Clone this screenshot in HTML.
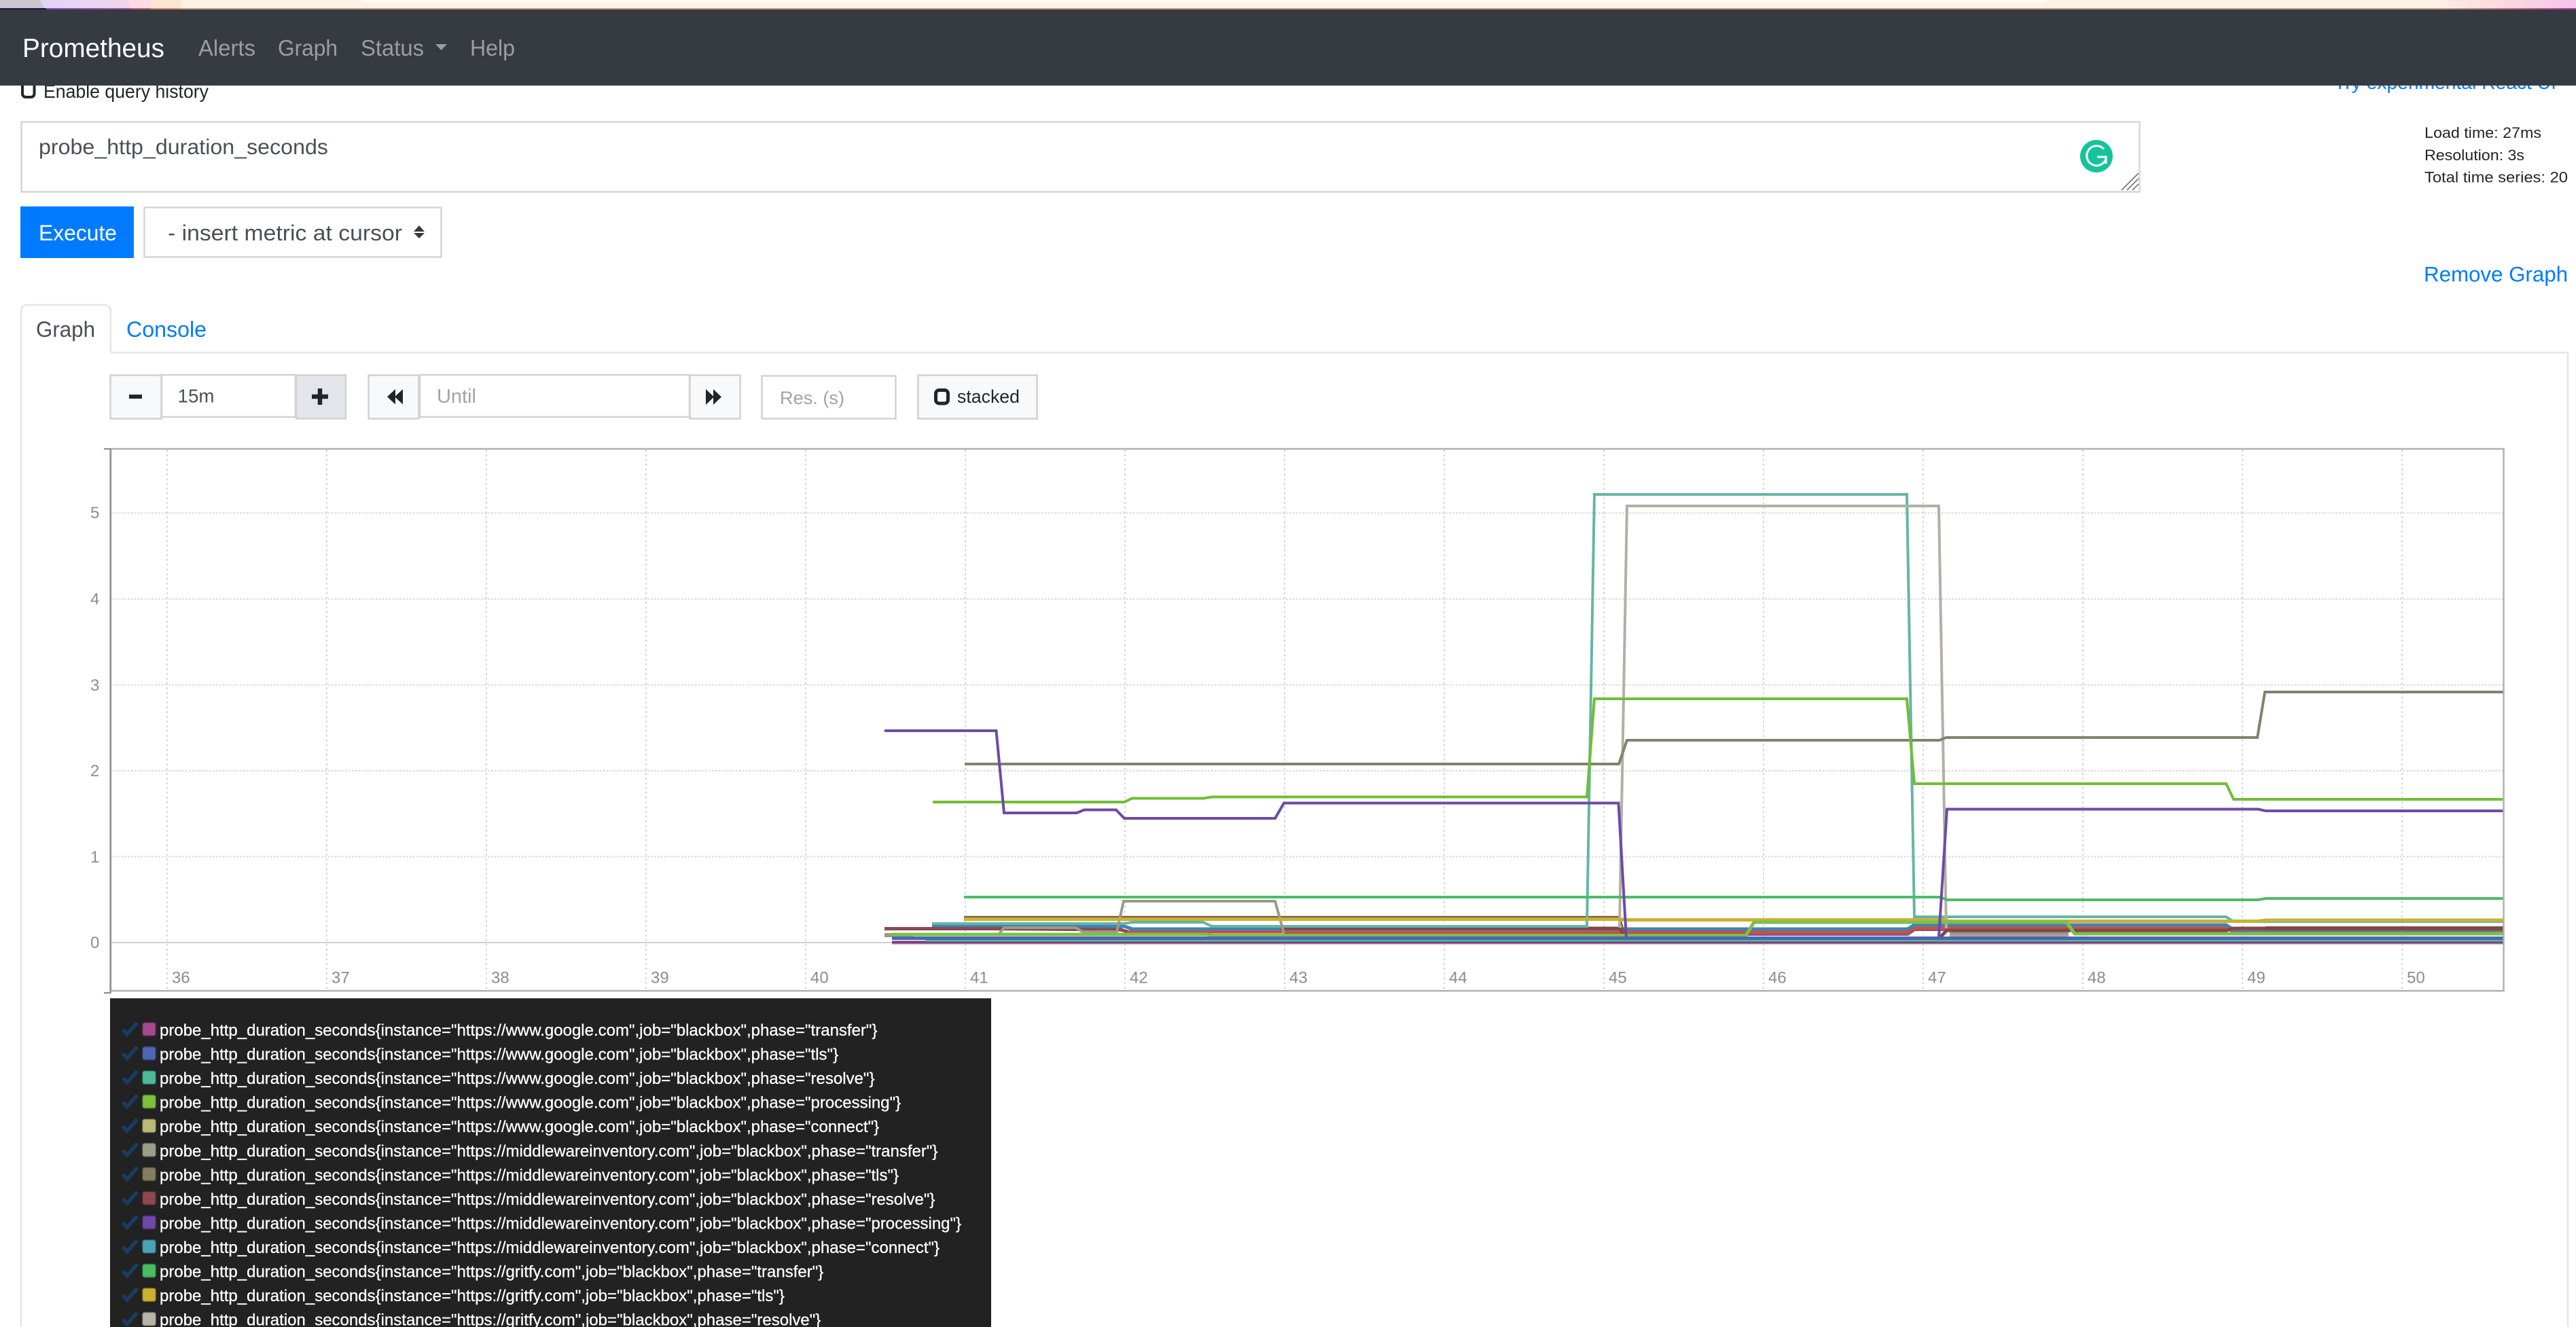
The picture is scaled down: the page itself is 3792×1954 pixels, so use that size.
<!DOCTYPE html>
<html lang="en">
<head>
<meta charset="utf-8">
<title>Prometheus Time Series Collection and Processing Server</title>
<style>
html,body{margin:0;padding:0;background:#fff;width:3792px;height:1954px;overflow:hidden}
svg{display:block;position:absolute;left:0;top:0}
text{font-family:"Liberation Sans",Arial,sans-serif}
.nav{font-size:33px;fill:#9b9da0}
.body{fill:#495057}
.link{fill:#007bff}
.ph{fill:#a3a3a3}
.stat{font-size:22.6px;fill:#212529}
.tick{font-size:24px;fill:#8c8c8c}
.leg{font-size:24px;fill:#fff;stroke:#fff;stroke-width:.3px}
.grid line{stroke:#d6d6d6;stroke-width:2}
.gh{stroke-dasharray:2.5 2.5}
.gv{stroke-dasharray:3 4}
.s{fill:none;stroke-linejoin:miter}
.ck{fill:none;stroke:#183d63;stroke-width:5.5}
.sw{stroke-width:2;stroke-opacity:.55}
.box{fill:#fff;stroke:#d2d6dc;stroke-width:2.5}
.cbox{fill:#fff;stroke:#d2d2d2;stroke-width:2.5}
.btn{fill:#f8f9fa;stroke:#d2d2d2;stroke-width:2.5}
</style>
</head>
<body>
<svg width="3792" height="1954" viewBox="0 0 3792 1954" xmlns="http://www.w3.org/2000/svg">
<defs>
<linearGradient id="lav" x1="0" x2="1" y1="0" y2="0"><stop offset="0" stop-color="#e2d4f7"/><stop offset="1" stop-color="#efd5ea"/></linearGradient>
<linearGradient id="rt" x1="0" x2="1" y1="0" y2="0"><stop offset="0" stop-color="#fff1e6"/><stop offset=".4" stop-color="#fdddde"/><stop offset="1" stop-color="#f3c4ec"/></linearGradient>
<linearGradient id="rtl" x1="0" x2="1" y1="0" y2="0"><stop offset="0" stop-color="#bd9a85"/><stop offset=".5" stop-color="#bb6f80"/><stop offset="1" stop-color="#a04090"/></linearGradient>
<linearGradient id="pl" x1="0" x2="1" y1="0" y2="0"><stop offset="0" stop-color="#7f46b8"/><stop offset="1" stop-color="#964fa3"/></linearGradient>
<linearGradient id="band" x1="0" x2="0" y1="0" y2="1"><stop offset="0" stop-color="#8a7f68"/><stop offset="1" stop-color="#b3b3a3"/></linearGradient>
</defs>

<!-- Desktop strip behind the browser -->
<rect x="0" y="0" width="3792" height="12" fill="#fff1e6"/>
<polygon points="530,0 3015,0 3010,4 537,4" fill="#fffaf5"/>
<rect x="3580" y="0" width="212" height="12" fill="url(#rt)"/>
<polygon points="0,0 59,0 66,12 0,12" fill="#c9c6ce"/>
<polygon points="59,0 187,0 193,12 66,12" fill="url(#lav)"/>
<polygon points="187,0 222,0 222,12 193,12" fill="#fddbe2"/>
<rect x="222" y="0" width="45" height="12" fill="#ffe4d4"/>
<rect x="0" y="12" width="3792" height="2" fill="#bd9a85"/>
<rect x="0" y="12" width="68" height="2" fill="#1f1440"/>
<rect x="68" y="12" width="125" height="2" fill="url(#pl)"/>
<rect x="193" y="12" width="29" height="2" fill="#c05a70"/>
<rect x="222" y="12" width="45" height="2" fill="#c98560"/>
<rect x="3580" y="12" width="212" height="2" fill="url(#rtl)"/>

<!-- Partially hidden header row -->
<rect x="33" y="120" width="17.5" height="23" rx="5" fill="none" stroke="#212529" stroke-width="4"/>
<text x="64" y="144" font-size="27.5" fill="#212529" textLength="243" lengthAdjust="spacingAndGlyphs">Enable query history</text>
<text x="3436" y="131" font-size="29" class="link" textLength="327" lengthAdjust="spacingAndGlyphs">Try experimental React UI</text>

<!-- Navbar -->
<rect x="0" y="14" width="3792" height="112" fill="#363b42"/>
<text x="33" y="84" font-size="38.5" fill="#fff" textLength="209" lengthAdjust="spacingAndGlyphs">Prometheus</text>
<text x="292" y="82" class="nav" textLength="84" lengthAdjust="spacingAndGlyphs">Alerts</text>
<text x="409" y="82" class="nav" textLength="88" lengthAdjust="spacingAndGlyphs">Graph</text>
<text x="531" y="82" class="nav" textLength="93" lengthAdjust="spacingAndGlyphs">Status</text>
<polygon points="641,65 658,65 649.5,74" fill="#9b9da0"/>
<text x="692" y="82" class="nav" textLength="66" lengthAdjust="spacingAndGlyphs">Help</text>

<!-- Expression -->
<rect x="31.5" y="179.5" width="3118" height="103" class="box"/>
<text x="57" y="227" font-size="31.5" class="body" textLength="426" lengthAdjust="spacingAndGlyphs">probe_http_duration_seconds</text>
<circle cx="3086" cy="230" r="24" fill="#15c39a"/>
<path d="M3097 219.5A14.5 14.5 0 1 0 3100 234" fill="none" stroke="#fff" stroke-width="3"/>
<path d="M3087 231H3100V241M3100 231" fill="none" stroke="#fff" stroke-width="3"/>
<path d="M3123 280L3148 255M3131 280L3148 263M3139 280L3148 271" stroke="#777" stroke-width="1.6" fill="none"/>

<!-- Stats -->
<text x="3569" y="203" class="stat" textLength="172" lengthAdjust="spacingAndGlyphs">Load time: 27ms</text>
<text x="3569" y="236" class="stat" textLength="147" lengthAdjust="spacingAndGlyphs">Resolution: 3s</text>
<text x="3569" y="268.5" class="stat" textLength="211" lengthAdjust="spacingAndGlyphs">Total time series: 20</text>

<!-- Execute + select -->
<rect x="30" y="304" width="167" height="76" fill="#007bff"/>
<text x="57" y="354" font-size="32" fill="#fff" textLength="115" lengthAdjust="spacingAndGlyphs">Execute</text>
<rect x="212.5" y="305.5" width="437" height="73" class="box"/>
<text x="247" y="354" font-size="32" class="body" textLength="345" lengthAdjust="spacingAndGlyphs">- insert metric at cursor</text>
<polygon points="609,341 617,332 625,341" fill="#343a40"/>
<polygon points="609,343 625,343 617,351" fill="#343a40"/>

<text x="3568" y="414.5" font-size="31.3" class="link" textLength="212" lengthAdjust="spacingAndGlyphs">Remove Graph</text>

<!-- Tabs -->
<path d="M31 1954V519M163 519H3780V1954" fill="none" stroke="#e2e5e9" stroke-width="2.5"/>
<path d="M31 519V459Q31 449 41 449H153Q163 449 163 459V519" fill="#fff" stroke="#e2e5e9" stroke-width="2.5"/>
<text x="53" y="496" font-size="32" class="body" textLength="87" lengthAdjust="spacingAndGlyphs">Graph</text>
<text x="186" y="496" font-size="32" class="link" textLength="118" lengthAdjust="spacingAndGlyphs">Console</text>

<!-- Graph controls -->
<rect x="162.5" y="552.5" width="75" height="64" class="btn"/>
<rect x="190" y="581" width="19" height="6" fill="#212529"/>
<rect x="238" y="552" width="197" height="62" class="cbox"/>
<text x="261.5" y="592.5" font-size="28" class="body" textLength="54" lengthAdjust="spacingAndGlyphs">15m</text>
<rect x="436" y="552.5" width="73" height="64" fill="#e2e6ea" stroke="#d2d2d2" stroke-width="2.5"/>
<path d="M459 584H483M471 572V596" stroke="#212529" stroke-width="6.5" fill="none"/>
<rect x="542.5" y="552.5" width="74" height="64" class="btn"/>
<polygon points="582,573 582,595.5 570,584.3" fill="#212529"/>
<polygon points="593,573 593,595.5 581,584.3" fill="#212529"/>
<rect x="618" y="552" width="397" height="62" class="cbox"/>
<text x="643" y="593" font-size="29" class="ph" textLength="58" lengthAdjust="spacingAndGlyphs">Until</text>
<rect x="1015.5" y="552.5" width="74" height="64" class="btn"/>
<polygon points="1039,573 1039,596 1051,584.5" fill="#212529"/>
<polygon points="1050,573 1050,596 1062,584.5" fill="#212529"/>
<rect x="1121.5" y="553.5" width="197" height="63" class="cbox"/>
<text x="1148" y="595" font-size="27" class="ph" textLength="95" lengthAdjust="spacingAndGlyphs">Res. (s)</text>
<rect x="1351.5" y="552.5" width="175" height="64" class="btn"/>
<rect x="1377.5" y="574.5" width="18" height="19.5" rx="5" fill="none" stroke="#212529" stroke-width="5"/>
<text x="1409" y="593" font-size="26.7" fill="#212529" textLength="92" lengthAdjust="spacingAndGlyphs">stacked</text>

<!-- Plot grid -->
<g class="grid">
<line class="gh" x1="163" x2="3685" y1="755.5" y2="755.5"/>
<line class="gh" x1="163" x2="3685" y1="882" y2="882"/>
<line class="gh" x1="163" x2="3685" y1="1008.5" y2="1008.5"/>
<line class="gh" x1="163" x2="3685" y1="1135" y2="1135"/>
<line class="gh" x1="163" x2="3685" y1="1261.5" y2="1261.5"/>
<line x1="163" x2="3685" y1="1388" y2="1388" style="stroke:#cfcfcf"/>
<line class="gv" x1="246" x2="246" y1="662" y2="1458"/>
<line class="gv" x1="481" x2="481" y1="662" y2="1458"/>
<line class="gv" x1="716" x2="716" y1="662" y2="1458"/>
<line class="gv" x1="951" x2="951" y1="662" y2="1458"/>
<line class="gv" x1="1186" x2="1186" y1="662" y2="1458"/>
<line class="gv" x1="1421" x2="1421" y1="662" y2="1458"/>
<line class="gv" x1="1656" x2="1656" y1="662" y2="1458"/>
<line class="gv" x1="1891" x2="1891" y1="662" y2="1458"/>
<line class="gv" x1="2126" x2="2126" y1="662" y2="1458"/>
<line class="gv" x1="2361" x2="2361" y1="662" y2="1458"/>
<line class="gv" x1="2596" x2="2596" y1="662" y2="1458"/>
<line class="gv" x1="2831" x2="2831" y1="662" y2="1458"/>
<line class="gv" x1="3066" x2="3066" y1="662" y2="1458"/>
<line class="gv" x1="3301" x2="3301" y1="662" y2="1458"/>
<line class="gv" x1="3536" x2="3536" y1="662" y2="1458"/>
</g>

<!-- Tick labels -->
<g class="tick">
<text x="133" y="763">5</text><text x="133" y="890">4</text><text x="133" y="1017">3</text><text x="133" y="1143">2</text><text x="133" y="1270">1</text><text x="133" y="1396">0</text>
<text x="253" y="1447.5">36</text><text x="488" y="1447.5">37</text><text x="723" y="1447.5">38</text><text x="958" y="1447.5">39</text><text x="1193" y="1447.5">40</text><text x="1428" y="1447.5">41</text><text x="1663" y="1447.5">42</text><text x="1898" y="1447.5">43</text><text x="2133" y="1447.5">44</text><text x="2368" y="1447.5">45</text><text x="2603" y="1447.5">46</text><text x="2838" y="1447.5">47</text><text x="3073" y="1447.5">48</text><text x="3308" y="1447.5">49</text><text x="3543" y="1447.5">50</text>
</g>

<!-- Series -->
<rect x="2870" y="1369" width="175" height="12" fill="url(#band)"/>
<path class="s" stroke="#8f5480" stroke-width="6" d="M1890 1375H2808L2818 1368H3290L3300 1372H3686"/>
<path class="s" stroke="#cc5239" stroke-width="5" d="M1660 1372H2808L2818 1366H3278L3288 1372H3686"/>
<path class="s" stroke="#4282b4" stroke-width="5" d="M1372 1364H1655L1667 1368H2808L2818 1362H3277L3288 1369H3686"/>
<path class="s" stroke="#8a4a50" stroke-width="5" d="M1302 1367.5H1470L1650 1369L1660 1372"/>
<path class="s" stroke="#85464a" stroke-width="5" d="M1885 1367H2384L2393 1380M2855 1381L2866 1370H3277L3288 1367H3324L3335 1367H3686"/>
<path class="s" stroke="#7e4744" stroke-width="6" d="M3335 1367H3686"/>
<path class="s" stroke="#7a5a3a" stroke-width="2.5" d="M1419 1350H2384L2393 1380"/>
<path class="s" stroke="#64b6a6" stroke-width="4" d="M1372 1360H1655L1667 1358H1771L1784 1364H2336L2347 728H2807L2818 1350H3277L3288 1357H3686"/>
<path class="s" stroke="#9a9b87" stroke-width="6" d="M1302 1377H1345"/>
<path class="s" stroke="#9a9b87" stroke-width="4" d="M1345 1376H1470L1478 1366H1583L1594 1372H1644L1654 1327H1877L1890 1374"/>
<path class="s" stroke="#b1b1a3" stroke-width="4" d="M2384 1366L2395 745H2854L2865 1367"/>
<path class="s" stroke="#c8b235" stroke-width="5" d="M1419 1353.5H2384L2394 1354.5H2863L2870 1356.5H3324L3335 1355H3686"/>
<path class="s" stroke="#4fbb68" stroke-width="4" d="M1419 1321H2856L2866 1325H3324L3335 1323H3686"/>
<path class="s" stroke="#7cc04a" stroke-width="5" d="M1313 1376H1776L1784 1377.5H2570L2582 1358H3042L3054 1375H3686"/>
<path class="s" stroke="#82836d" stroke-width="4" d="M1420 1125H2383L2395 1090H2855L2865 1086H3323L3334 1019H3686"/>
<path class="s" stroke="#72bd37" stroke-width="4" d="M1373 1181H1655L1666.5 1175.5H1772L1784 1173.5H2336L2347 1029H2807L2818 1154H3277L3288 1177H3686"/>
<path class="s" stroke="#6e4aa6" stroke-width="4" d="M1302 1076H1466.5L1478 1197H1585L1596 1192.5H1643L1655 1205H1877L1890 1182.5H2382.5L2394 1381H2854L2866 1191.5H3324L3335 1194H3686"/>
<path class="s" stroke="#d6bfd6" stroke-width="6" d="M1313 1388H3686"/>
<path class="s" stroke="#7e3f7e" stroke-width="4" d="M1313 1387.5H3686"/>
<path class="s" stroke="#4fb89a" stroke-width="3" d="M1363 1385H3686"/>
<path class="s" stroke="#4a66b4" stroke-width="5" d="M1313 1381.5H3686"/>

<!-- Plot border -->
<rect x="163" y="661" width="3522.5" height="798" fill="none" stroke="#b0b0b0" stroke-width="2.5"/>
<path d="M162.5 660V1462H153M162.5 661H153" fill="none" stroke="#8c8c8c" stroke-width="2.2"/>

<!-- Legend -->
<rect x="162" y="1470" width="1297" height="484" fill="#222"/>
<g>
<path class="ck" d="M181 1516L187 1523L202 1506"/><rect class="sw" x="210" y="1506" width="19" height="19" rx="3" fill="#a54a8f" stroke="#7c2f6a"/>
<text class="leg" x="235" y="1525">probe_http_duration_seconds{instance="https://www.google.com",job="blackbox",phase="transfer"}</text>
</g>
<g transform="translate(0,35.56)">
<path class="ck" d="M181 1516L187 1523L202 1506"/><rect class="sw" x="210" y="1506" width="19" height="19" rx="3" fill="#4e66b4" stroke="#344a90"/>
<text class="leg" x="235" y="1525">probe_http_duration_seconds{instance="https://www.google.com",job="blackbox",phase="tls"}</text>
</g>
<g transform="translate(0,71.12)">
<path class="ck" d="M181 1516L187 1523L202 1506"/><rect class="sw" x="210" y="1506" width="19" height="19" rx="3" fill="#4db89a" stroke="#2f9078"/>
<text class="leg" x="235" y="1525">probe_http_duration_seconds{instance="https://www.google.com",job="blackbox",phase="resolve"}</text>
</g>
<g transform="translate(0,106.68)">
<path class="ck" d="M181 1516L187 1523L202 1506"/><rect class="sw" x="210" y="1506" width="19" height="19" rx="3" fill="#7cc040" stroke="#5a9a28"/>
<text class="leg" x="235" y="1525">probe_http_duration_seconds{instance="https://www.google.com",job="blackbox",phase="processing"}</text>
</g>
<g transform="translate(0,142.24)">
<path class="ck" d="M181 1516L187 1523L202 1506"/><rect class="sw" x="210" y="1506" width="19" height="19" rx="3" fill="#bdb976" stroke="#98945a"/>
<text class="leg" x="235" y="1525">probe_http_duration_seconds{instance="https://www.google.com",job="blackbox",phase="connect"}</text>
</g>
<g transform="translate(0,177.8)">
<path class="ck" d="M181 1516L187 1523L202 1506"/><rect class="sw" x="210" y="1506" width="19" height="19" rx="3" fill="#9c9e8a" stroke="#7d7f6c"/>
<text class="leg" x="235" y="1525">probe_http_duration_seconds{instance="https://middlewareinventory.com",job="blackbox",phase="transfer"}</text>
</g>
<g transform="translate(0,213.36)">
<path class="ck" d="M181 1516L187 1523L202 1506"/><rect class="sw" x="210" y="1506" width="19" height="19" rx="3" fill="#867d60" stroke="#665e45"/>
<text class="leg" x="235" y="1525">probe_http_duration_seconds{instance="https://middlewareinventory.com",job="blackbox",phase="tls"}</text>
</g>
<g transform="translate(0,248.92)">
<path class="ck" d="M181 1516L187 1523L202 1506"/><rect class="sw" x="210" y="1506" width="19" height="19" rx="3" fill="#8c4a50" stroke="#6c3238"/>
<text class="leg" x="235" y="1525">probe_http_duration_seconds{instance="https://middlewareinventory.com",job="blackbox",phase="resolve"}</text>
</g>
<g transform="translate(0,284.48)">
<path class="ck" d="M181 1516L187 1523L202 1506"/><rect class="sw" x="210" y="1506" width="19" height="19" rx="3" fill="#6f49a8" stroke="#523288"/>
<text class="leg" x="235" y="1525">probe_http_duration_seconds{instance="https://middlewareinventory.com",job="blackbox",phase="processing"}</text>
</g>
<g transform="translate(0,320.04)">
<path class="ck" d="M181 1516L187 1523L202 1506"/><rect class="sw" x="210" y="1506" width="19" height="19" rx="3" fill="#4aa3b5" stroke="#30808f"/>
<text class="leg" x="235" y="1525">probe_http_duration_seconds{instance="https://middlewareinventory.com",job="blackbox",phase="connect"}</text>
</g>
<g transform="translate(0,355.6)">
<path class="ck" d="M181 1516L187 1523L202 1506"/><rect class="sw" x="210" y="1506" width="19" height="19" rx="3" fill="#4bbb62" stroke="#2f9546"/>
<text class="leg" x="235" y="1525">probe_http_duration_seconds{instance="https://gritfy.com",job="blackbox",phase="transfer"}</text>
</g>
<g transform="translate(0,391.16)">
<path class="ck" d="M181 1516L187 1523L202 1506"/><rect class="sw" x="210" y="1506" width="19" height="19" rx="3" fill="#c8b22f" stroke="#a08c18"/>
<text class="leg" x="235" y="1525">probe_http_duration_seconds{instance="https://gritfy.com",job="blackbox",phase="tls"}</text>
</g>
<g transform="translate(0,426.72)">
<path class="ck" d="M181 1516L187 1523L202 1506"/><rect class="sw" x="210" y="1506" width="19" height="19" rx="3" fill="#b4b5a6" stroke="#929384"/>
<text class="leg" x="235" y="1525">probe_http_duration_seconds{instance="https://gritfy.com",job="blackbox",phase="resolve"}</text>
</g>
</svg>
</body>
</html>
